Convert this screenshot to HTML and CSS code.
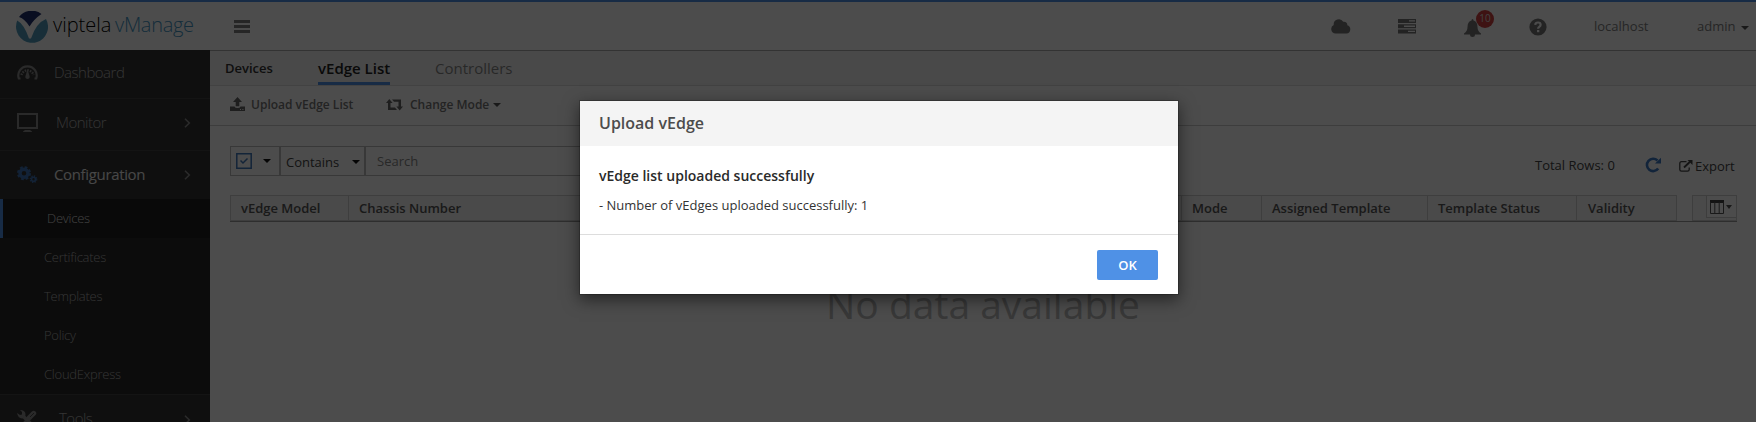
FILE: index.html
```html
<!DOCTYPE html>
<html lang="en">
<head>
<meta charset="utf-8">
<title>viptela vManage</title>
<link rel="stylesheet" href="styles.css">
</head>
<body>
<div class="app">
  <header class="header">
    <div class="brand">
      <svg class="logo" width="32" height="32" viewBox="0 0 32 32"><path fill="#21316e" d="M3 6A16 16 0 0 1 25.500 3Q18 8 13.500 15.500Q9 8 3 6Z"/><path fill="#509cbd" d="M1.200 9.500Q8 13 13 27.500H15Q20 12 30 8A16 16 0 1 1 .2 18A16 16 0 0 1 1.200 9.500Z"/></svg>
      <span class="brand-a">viptela</span><span class="brand-b">vManage</span>
    </div>
    <svg class="burger" width="16" height="13" viewBox="0 0 16 13"><path fill="#808080" d="M0 0h16v3H0zM0 5h16v3H0zM0 10h16v3H0z"/></svg>
    <div class="tools">
      <svg class="t-cloud" width="20" height="15" viewBox="0 0 20 15"><path fill="#777" d="M4.500 14.500A4.500 4.500 0 0 1 2.700 6A5.200 5.200 0 0 1 12.300 2.800A3.200 3.200 0 0 1 16.300 6.300A4.200 4.200 0 0 1 15.500 14.500Z"/></svg>
      <svg class="t-server" width="18" height="15" viewBox="0 0 18 15"><path fill="#777" fill-rule="evenodd" d="M0 0h18v4H0zM11 1.300v1.300h6V1.300zM0 5.300h18v4H0zM6 6.600v1.300h11V6.600zM0 10.500h18v4H0zM10 11.800v1.300h7v-1.300z"/></svg>
      <div class="bell"><svg width="17" height="18" viewBox="0 0 17 18"><path fill="#777" d="M8.500 0Q9.500 0 9.500 1.500Q13.500 2.500 13.500 8Q13.500 12 17 14.500V15.500H11A2.500 2.500 0 0 1 6 15.500H0V14.500Q3.500 12 3.500 8Q3.500 2.500 7.500 1.500Q7.500 0 8.500 0Z"/></svg><span class="badge">10</span></div>
      <svg class="t-help" width="18" height="18" viewBox="0 0 18 18"><circle cx="9" cy="9" r="8.600" fill="#777"/><path d="M6.200 6.800Q6.500 4.500 9 4.500Q11.600 4.500 11.600 6.800Q11.600 8 10.200 8.900Q9.100 9.600 9.100 10.800" fill="none" stroke="#fff" stroke-width="2.200"/><path fill="#fff" d="M8 12h2.300v2.200H8z"/></svg>
      <span class="host">localhost</span>
      <span class="user">admin</span><i class="caret user-caret"></i>
    </div>
  </header>
  <div class="body">
    <nav class="side">
      <a class="item dash"><svg width="21" height="18" viewBox="0 0 21 18"><path fill="none" stroke="#8c8c8c" stroke-width="2.200" d="M3.500 15.500H1.800A9.200 9.200 0 1 1 19.200 15.500H17.500"/><path fill="none" stroke="#8c8c8c" stroke-width="2.300" stroke-dasharray="1.500 1.100" d="M4.500 12A6.200 6.200 0 0 1 16.500 12"/><path fill="#8c8c8c" d="M10.500 6L12.500 13A2.200 2.200 0 1 1 8.500 13Z"/></svg><span>Dashboard</span></a>
      <a class="item mon"><svg width="21" height="20" viewBox="0 0 21 20"><path fill="#8c8c8c" fill-rule="evenodd" d="M0 0h21v16H0zM2 2v12h17V2zM8 17h5l2 1.500V19H6v-.5z"/></svg><span>Monitor</span><svg class="chev" width="7" height="10" viewBox="0 0 7 10"><path d="M1 .7L5.300 5L1 9.300" fill="none" stroke="#909090" stroke-width="1.500"/></svg></a>
      <a class="item conf"><svg width="21" height="18" viewBox="0 0 21 18"><g fill="none" stroke="#3d74b8"><circle cx="7" cy="7.200" r="4" stroke-width="3.400"/><circle cx="7" cy="7.200" r="6" stroke-width="2" stroke-dasharray="2.700 2.010"/><circle cx="16.500" cy="13.200" r="2" stroke-width="1.600"/><circle cx="16.500" cy="13.200" r="3.200" stroke-width="1.300" stroke-dasharray="1.300 1.213"/></g></svg><span>Configuration</span><svg class="chev" width="7" height="10" viewBox="0 0 7 10"><path d="M1 .7L5.300 5L1 9.300" fill="none" stroke="#909090" stroke-width="1.500"/></svg></a>
      <div class="sub">
        <a class="active">Devices</a><a>Certificates</a><a>Templates</a><a>Policy</a><a>CloudExpress</a>
      </div>
      <a class="item tool"><svg width="20" height="20" viewBox="0 0 20 20"><path d="M5 5L18 18" stroke="#8c8c8c" stroke-width="3.600"/><path d="M2 18L9 11" stroke="#8c8c8c" stroke-width="2.500"/><path d="M12 8L16.700 3.300" stroke="#8c8c8c" stroke-width="5" stroke-linecap="round"/><path d="M13 7L17 3" stroke="#353535" stroke-width=".8"/><path fill="#8c8c8c" d="M0 3L3 5L5 4.500V2L3 0Q8 0 8.500 4Q8.500 8 5 8.500Q1 8 0 3Z"/></svg><span>Tools</span><svg class="chev" width="7" height="10" viewBox="0 0 7 10"><path d="M1 .7L5.300 5L1 9.300" fill="none" stroke="#909090" stroke-width="1.500"/></svg></a>
    </nav>
    <main class="main">
      <div class="tabs"><span class="crumb">Devices</span><span class="tab on">vEdge List</span><span class="tab off">Controllers</span></div>
      <div class="actions">
        <svg width="15" height="15" viewBox="0 0 15 15"><path fill="#666" d="M7.500 0L12 5H9.300V9.300H5.700V5H3zM0 9.500h4.500Q5 11 7.500 11T10.500 9.500H15V14H0z"/><path fill="#fff" d="M10 11.900h1v1h-1zM12.400 11.900h1v1h-1z"/></svg>
        <span class="upload">Upload vEdge List</span>
        <svg class="swap" width="17" height="12" viewBox="0 0 17 12"><path fill="#666" d="M3.300 0L6.600 4H4.500V8.600H9L11 11H2V4H0zM13.700 11.500L10.400 7.500H12.500V2.800H8L6 .4H15V7.500H17z"/></svg>
        <span class="mode">Change Mode</span><i class="caret mode-caret"></i>
      </div>
      <div class="filter">
        <div class="pick"><svg width="16" height="16" viewBox="0 0 16 16"><path d="M.8.800h14.400v14.400H.8z" fill="none" stroke="#4078bd" stroke-width="1.500"/><path d="M4.500 7.500L7 10L11.500 5.500" fill="none" stroke="#4078bd" stroke-width="1.500"/></svg><i class="caret dark"></i></div>
        <div class="contains"><span>Contains</span><i class="caret dark"></i></div>
        <div class="search">Search</div>
        <div class="summary"><span class="total">Total Rows: 0</span>
          <svg class="refresh" width="16" height="16" viewBox="0 0 16 16"><path d="M13.200 11.500A6.200 6.200 0 1 1 12.500 3.500" fill="none" stroke="#3c79c4" stroke-width="2.600"/><path fill="#3c79c4" d="M16 .8V6.600H10z"/></svg>
          <svg class="export-i" width="14" height="12" viewBox="0 0 14 12"><path d="M7.500 1.700H2.500Q.8 1.700.8 3.400V9.500Q.8 11.200 2.500 11.200H8.500Q10.200 11.200 10.200 9.500V7.500" fill="none" stroke="#444" stroke-width="1.300"/><path d="M5 7.500L11 1.800" stroke="#444" stroke-width="1.900"/><path fill="#444" d="M8.500 0H13.500V5z"/></svg>
          <span class="export">Export</span></div>
      </div>
      <div class="thead">
        <div class="c1">vEdge Model</div><div class="c2">Chassis Number</div><div class="c3">Mode</div><div class="c4">Assigned Template</div><div class="c5">Template Status</div><div class="c6">Validity</div>
        <div class="cols"><div class="cols-btn"><svg width="14" height="14" viewBox="0 0 14 14"><path fill="#444" d="M0 0h14v3H0z"/><path d="M.5 2v11.500h13V2M4.800 2v11.500M9.200 2v11.500" fill="none" stroke="#555"/></svg><i class="caret"></i></div></div>
      </div>
      <div class="empty">No data available</div>
    </main>
  </div>
</div>
<div class="backdrop">
  <section class="modal">
    <h1>Upload vEdge</h1>
    <div class="content"><h2>vEdge list uploaded successfully</h2><p>- Number of vEdges uploaded successfully: 1</p></div>
    <footer><button>OK</button></footer>
  </section>
</div>
</body>
</html>
```
FILE: styles.css
```css
* { box-sizing: border-box; }
html, body { margin: 0; height: 422px; overflow: hidden; }
body { font: 13px/18px "Open Sans", sans-serif; color: #444; background: #fff; white-space: nowrap; }
svg { display: block; flex: none; }
.app { height: 422px; overflow: hidden; }
.caret { display: block; flex: none; border: 4px solid transparent; border-top-color: #555; border-bottom: 0; }
.caret.dark { border-top-color: #111; }

.header { height: 50px; border-top: 2px solid #4f91e6; display: flex; align-items: flex-start; }
.brand { display: flex; width: 234px; padding: 9px 0 0 16px; font-size: 20px; line-height: 28px; font-weight: 300; }
.brand-a { margin-left: 5px; width: 62px; color: #000; }
.brand-b { color: #4496c4; letter-spacing: -.3px; }
.burger { margin-top: 18px; }
.tools { flex: 1; display: flex; padding: 17px 7px 0 0; justify-content: flex-end; color: #808080; line-height: 15px; }
.t-server { margin-left: 47px; }
.bell { position: relative; width: 17px; margin-left: 48px; }
.badge { position: absolute; left: 12px; top: -9px; width: 18px; height: 18px; border-radius: 50%; background: #d04040; color: #ddd; font-size: 10px; line-height: 17px; text-align: center; }
.t-help { margin-left: 48px; margin-top: -1px; }
.host { margin-left: 47px; width: 103px; }
.user { width: 44px; }
.user-caret { margin-top: 7px; }

.body { display: flex; height: 372px; }
.side { width: 210px; flex: none; background: #353535; color: #b0b0b0; font-weight: 300; }
.item { display: flex; align-items: center; padding: 0 19px 0 17px; font-size: 15px; letter-spacing: -.5px; }
.item .chev { margin-left: auto; }
.dash { height: 49px; padding-bottom: 4px; border-bottom: 1px solid #444; }
.dash span { margin-left: 16px; }
.mon { height: 52px; padding-bottom: 4px; border-bottom: 1px solid #444; }
.mon span { margin-left: 18px; padding-bottom: 2px; }
.conf { height: 48px; color: #eee; font-weight: 400; letter-spacing: -.35px; }
.conf span { margin-left: 16px; padding-bottom: 2px; }
.sub { background: #292929; letter-spacing: -.25px; }
.sub a { display: block; height: 39px; line-height: 39px; padding-left: 44px; }
.sub .active { background: #1e1e1e; border-left: 3px solid #4f91e6; color: #ddd; }
.tool { height: 50px; border-top: 1px solid #444; }
.tool span { margin-left: 22px; padding-bottom: 3px; }

.main { flex: 1; min-width: 0; border-top: 1px solid #aaa; }
.tabs { height: 35px; display: flex; background: #f5f5f5; border-bottom: 1px solid #ddd; line-height: 35px; padding-left: 15px; }
.crumb { width: 93px; color: #333; font-weight: 600; }
.tab { font-size: 15px; }
.on { width: 72px; font-weight: 600; color: #222; border-bottom: 3px solid #4f91e6; }
.off { margin-left: 45px; color: #888; }
.actions { height: 40px; display: flex; align-items: center; border-bottom: 1px solid #ccc; padding: 0 0 2px 20px; font-size: 12px; font-weight: 600; color: #777; }
.upload { margin-left: 6px; width: 135px; }
.mode { margin-left: 7px; width: 83px; }

.filter { display: flex; height: 49px; margin-top: 20px; padding-left: 20px; }
.filter > div { height: 30px; }
.pick, .contains { display: flex; align-items: center; border: 1px solid #bbb; }
.pick { width: 50px; padding-left: 5px; }
.pick .caret { margin-left: 11px; }
.contains { width: 85px; padding: 1px 0 0 5px; color: #444; }
.contains .caret { margin-left: auto; margin-right: 4px; }
.search { width: 600px; border: 1px solid #bbb; padding-left: 11px; line-height: 29px; color: #888; }
.summary { flex: 1; display: flex; align-items: flex-start; justify-content: flex-end; padding: 10px 21px 0 0; color: #444; }
.total { width: 110px; }
.refresh { margin-top: 1px; }
.export-i { margin: 4px 0 0 18px; }
.export { margin-left: 2px; width: 40px; padding-top: 1px; }

.thead { display: flex; margin: 0 19px 0 20px; height: 27px; border-bottom: 1px solid #999; font-weight: 600; line-height: 24px; color: #555; }
.thead > div { border: 1px solid #d0d0d0; border-right: 0; padding-left: 10px; background: #f7f7f7; }
.c1 { width: 118px; }
.c2 { width: 833px; }
.c3 { width: 80px; }
.c4 { width: 166px; }
.c5 { width: 149px; }
.thead > .c6 { width: 101px; padding-left: 11px; border-right: 1px solid #d0d0d0; }
.thead > .cols { width: 45px; margin-left: 15px; padding: 0 0 0 13px; border-right: 1px solid #d0d0d0; }
.cols-btn { height: 22px; display: flex; align-items: center; background: #fff; border: 1px solid #ccc; border-width: 0 0 1px 1px; padding-left: 3px; }
.cols-btn .caret { margin-left: 2px; border-width: 4px 3px 0; }
.empty { margin-top: 55px; text-align: center; font-size: 39px; line-height: 54px; color: #bbb; }

.backdrop { position: absolute; inset: 0; background: rgba(0,0,0,.7); display: flex; justify-content: center; align-items: flex-start; padding: 100px 0 0 2px; }
.modal { width: 600px; height: 195px; background: #fff; background-clip: padding-box; border: 1px solid rgba(0,0,0,.2); box-shadow: 0 5px 15px rgba(0,0,0,.5); }
.modal h1 { margin: 0; height: 45px; padding-left: 19px; background: #f4f4f4; font-size: 16px; line-height: 45px; font-weight: 600; color: #4c4c4c; }
.content { height: 89px; padding: 20px 19px 0; border-bottom: 1px solid #ddd; color: #333; }
.modal h2 { margin: 0; font-size: 14px; line-height: 20px; font-weight: 600; color: #2a2a2a; }
.modal p { margin: 10px 0 0; line-height: 18px; }
.modal footer { display: flex; justify-content: flex-end; padding: 15px 20px 0; }
.modal button { width: 61px; height: 30px; padding: 0; border: 0; border-radius: 2px; background: #4f91e6; color: #fff; font: 600 13px/30px "Open Sans", sans-serif; }
```
